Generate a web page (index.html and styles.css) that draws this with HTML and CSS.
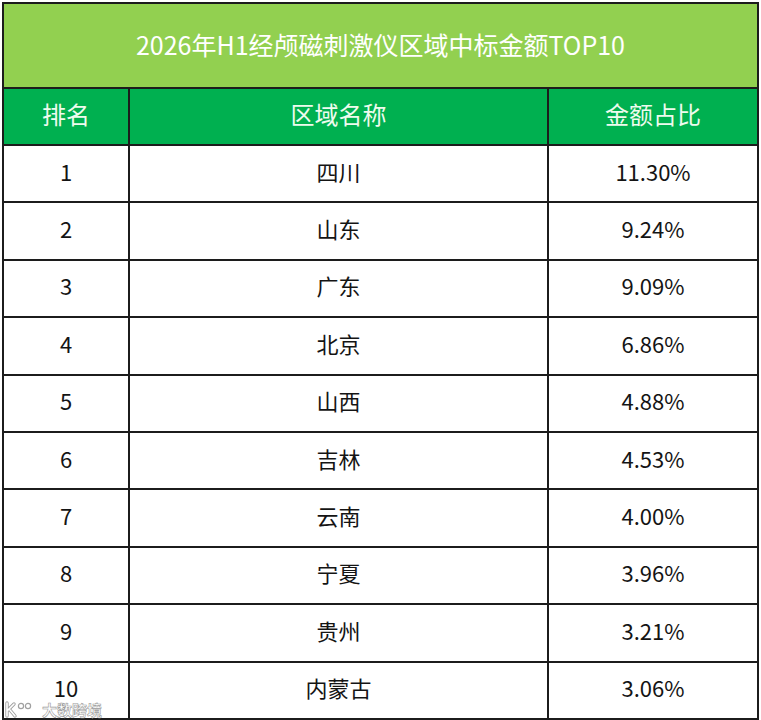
FILE: index.html
```
<!DOCTYPE html>
<html lang="zh">
<head>
<meta charset="utf-8">
<title>2026年H1经颅磁刺激仪区域中标金额TOP10</title>
<link rel="stylesheet" href="styles.css">
</head>
<body>
<div class="sheet">
  <div class="title">2026年H1经颅磁刺激仪区域中标金额TOP10</div>
  <div class="th">排名</div><div class="th">区域名称</div><div class="th">金额占比</div>
  <div class="td">1</div><div class="td">四川</div><div class="td">11.30%</div>
  <div class="td">2</div><div class="td">山东</div><div class="td">9.24%</div>
  <div class="td">3</div><div class="td">广东</div><div class="td">9.09%</div>
  <div class="td">4</div><div class="td">北京</div><div class="td">6.86%</div>
  <div class="td">5</div><div class="td">山西</div><div class="td">4.88%</div>
  <div class="td">6</div><div class="td">吉林</div><div class="td">4.53%</div>
  <div class="td">7</div><div class="td">云南</div><div class="td">4.00%</div>
  <div class="td">8</div><div class="td">宁夏</div><div class="td">3.96%</div>
  <div class="td">9</div><div class="td">贵州</div><div class="td">3.21%</div>
  <div class="td">10</div><div class="td">内蒙古</div><div class="td">3.06%</div>
</div>
<div class="watermark">
  <svg class="wm-logo" width="30" height="18" viewBox="0 0 30 18">
    <path d="M3 2 V15 M3 10 L10 3 M6 9 L11 15" fill="none" stroke="#a0a0a0" stroke-width="3.4" stroke-linecap="round"/>
    <path d="M3 2 V15 M3 10 L10 3 M6 9 L11 15" fill="none" stroke="#fff" stroke-width="1.6" stroke-linecap="round"/>
    <circle cx="17" cy="5" r="2.6" fill="#fff" stroke="#a0a0a0" stroke-width="1.2"/>
    <circle cx="24" cy="5" r="2.6" fill="#fff" stroke="#a0a0a0" stroke-width="1.2"/>
  </svg>
  <span class="wm-text">大数跨境</span>
</div>
</body>
</html>
```
FILE: styles.css
```
html, body {
  margin: 0;
  padding: 0;
  background: #ffffff;
}
body {
  width: 761px;
  height: 720px;
  position: relative;
  overflow: hidden;
  font-family: "Noto Sans CJK SC", "Noto Sans", sans-serif;
}
.sheet {
  margin: 2px 0 0 2px;
  width: 757px;
  height: 718px;
  box-sizing: border-box;
  padding: 2px;
  background: #1c1c1c;
  display: grid;
  grid-template-columns: 124px 417px 208px;
  grid-template-rows: 83px 55px repeat(10, 1fr);
  gap: 2px;
}
.title {
  grid-column: 1 / 4;
  background: #92d050;
  color: #ffffff;
  font-size: 25px;
  display: flex;
  align-items: center;
  justify-content: center;
  padding-bottom: 4px;
}
.th {
  background: #00b050;
  color: #eefbee;
  font-size: 24px;
  display: flex;
  align-items: center;
  justify-content: center;
  padding-bottom: 6px;
}
.td {
  background: #ffffff;
  color: #141414;
  font-size: 22px;
  display: flex;
  align-items: center;
  justify-content: center;
  padding-bottom: 6px;
}
.watermark {
  position: absolute;
  left: 4px;
  top: 699px;
  display: flex;
  align-items: center;
  gap: 8px;
}
.wm-text {
  font-size: 15px;
  font-weight: bold;
  color: rgba(255,255,255,0.9);
  -webkit-text-stroke: 0.6px #9a9a9a;
}
```
